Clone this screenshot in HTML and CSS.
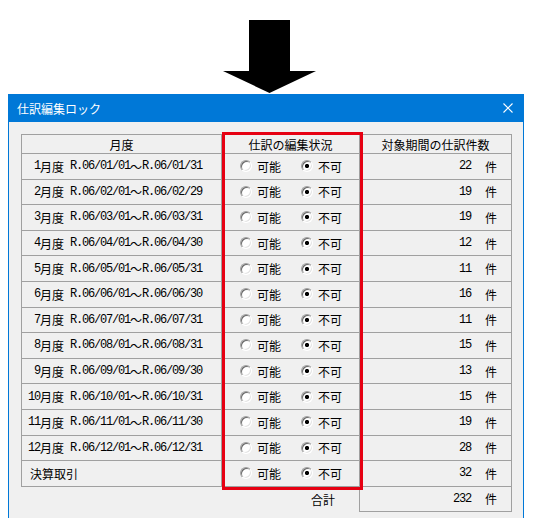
FILE: index.html
```html
<!DOCTYPE html>
<html lang="ja">
<head>
  <meta charset="UTF-8">
  <title>仕訳編集ロック</title>
  <link rel="stylesheet" href="styles.css">
</head>
<body>
  <svg class="arrow" viewBox="0 0 93 74" width="93" height="74">
    <polygon points="26,0 67,0 67,51 93,51 46.5,73 0,51 26,51" fill="#000"/>
  </svg>

  <div class="dialog">
    <div class="titlebar">
      <span class="title">仕訳編集ロック</span>
      <svg class="close" viewBox="0 0 10 10" width="10" height="10">
        <path d="M0.5 0.5 L9.5 9.5 M9.5 0.5 L0.5 9.5" stroke="#fff" stroke-width="1.1" fill="none"/>
      </svg>
    </div>

    <div class="body">
      <div class="grid-wrap">
        <div class="grid">
          <div class="cell head">月度</div>
          <div class="cell head">仕訳の編集状況</div>
          <div class="cell head">対象期間の仕訳件数</div>

          <div class="cell term"><span class="n"> 1</span>月度<span class="n"> R.06/01/01</span>～<span class="n">R.06/01/31</span></div>
          <div class="cell lock"><label><input type="radio" name="m1">可能</label><label><input type="radio" name="m1" checked>不可</label></div>
          <div class="cell count"><span class="n">22</span><span class="unit">件</span></div>

          <div class="cell term"><span class="n"> 2</span>月度<span class="n"> R.06/02/01</span>～<span class="n">R.06/02/29</span></div>
          <div class="cell lock"><label><input type="radio" name="m2">可能</label><label><input type="radio" name="m2" checked>不可</label></div>
          <div class="cell count"><span class="n">19</span><span class="unit">件</span></div>

          <div class="cell term"><span class="n"> 3</span>月度<span class="n"> R.06/03/01</span>～<span class="n">R.06/03/31</span></div>
          <div class="cell lock"><label><input type="radio" name="m3">可能</label><label><input type="radio" name="m3" checked>不可</label></div>
          <div class="cell count"><span class="n">19</span><span class="unit">件</span></div>

          <div class="cell term"><span class="n"> 4</span>月度<span class="n"> R.06/04/01</span>～<span class="n">R.06/04/30</span></div>
          <div class="cell lock"><label><input type="radio" name="m4">可能</label><label><input type="radio" name="m4" checked>不可</label></div>
          <div class="cell count"><span class="n">12</span><span class="unit">件</span></div>

          <div class="cell term"><span class="n"> 5</span>月度<span class="n"> R.06/05/01</span>～<span class="n">R.06/05/31</span></div>
          <div class="cell lock"><label><input type="radio" name="m5">可能</label><label><input type="radio" name="m5" checked>不可</label></div>
          <div class="cell count"><span class="n">11</span><span class="unit">件</span></div>

          <div class="cell term"><span class="n"> 6</span>月度<span class="n"> R.06/06/01</span>～<span class="n">R.06/06/30</span></div>
          <div class="cell lock"><label><input type="radio" name="m6">可能</label><label><input type="radio" name="m6" checked>不可</label></div>
          <div class="cell count"><span class="n">16</span><span class="unit">件</span></div>

          <div class="cell term"><span class="n"> 7</span>月度<span class="n"> R.06/07/01</span>～<span class="n">R.06/07/31</span></div>
          <div class="cell lock"><label><input type="radio" name="m7">可能</label><label><input type="radio" name="m7" checked>不可</label></div>
          <div class="cell count"><span class="n">11</span><span class="unit">件</span></div>

          <div class="cell term"><span class="n"> 8</span>月度<span class="n"> R.06/08/01</span>～<span class="n">R.06/08/31</span></div>
          <div class="cell lock"><label><input type="radio" name="m8">可能</label><label><input type="radio" name="m8" checked>不可</label></div>
          <div class="cell count"><span class="n">15</span><span class="unit">件</span></div>

          <div class="cell term"><span class="n"> 9</span>月度<span class="n"> R.06/09/01</span>～<span class="n">R.06/09/30</span></div>
          <div class="cell lock"><label><input type="radio" name="m9">可能</label><label><input type="radio" name="m9" checked>不可</label></div>
          <div class="cell count"><span class="n">13</span><span class="unit">件</span></div>

          <div class="cell term"><span class="n">10</span>月度<span class="n"> R.06/10/01</span>～<span class="n">R.06/10/31</span></div>
          <div class="cell lock"><label><input type="radio" name="m10">可能</label><label><input type="radio" name="m10" checked>不可</label></div>
          <div class="cell count"><span class="n">15</span><span class="unit">件</span></div>

          <div class="cell term"><span class="n">11</span>月度<span class="n"> R.06/11/01</span>～<span class="n">R.06/11/30</span></div>
          <div class="cell lock"><label><input type="radio" name="m11">可能</label><label><input type="radio" name="m11" checked>不可</label></div>
          <div class="cell count"><span class="n">19</span><span class="unit">件</span></div>

          <div class="cell term"><span class="n">12</span>月度<span class="n"> R.06/12/01</span>～<span class="n">R.06/12/31</span></div>
          <div class="cell lock"><label><input type="radio" name="m12">可能</label><label><input type="radio" name="m12" checked>不可</label></div>
          <div class="cell count"><span class="n">28</span><span class="unit">件</span></div>

          <div class="cell term closing">決算取引</div>
          <div class="cell lock"><label><input type="radio" name="m13">可能</label><label><input type="radio" name="m13" checked>不可</label></div>
          <div class="cell count"><span class="n">32</span><span class="unit">件</span></div>
        </div>

        <!-- highlight around the edit-status column -->
        <div class="lock-frame"></div>
      </div>

      <div class="total">
        <div class="total-label">合計</div>
        <div class="total-box"><span class="n">232</span><span class="unit">件</span></div>
      </div>
    </div>
  </div>
</body>
</html>
```

FILE: styles.css
```css
body {
  margin: 0;
  background: #fff;
  font-family: "Noto Sans CJK JP", sans-serif;
  font-size: 12px;
  color: #000;
}
.arrow {
  display: block;
  margin: 20px 0 0 223px;
}
.dialog {
  width: 516px;
  margin-left: 8px;
}
.titlebar {
  height: 28px;
  background: #0078d7;
  color: #fff;
  display: flex;
  align-items: center;
  justify-content: space-between;
  padding: 0 11px 0 9px;
}
.title {
  font-size: 12px;
}
.close {
  display: block;
}
.body {
  height: 396px;
  box-sizing: border-box;
  background: #f0f0f0;
  border-left: 1px solid #0078d7;
  border-right: 1px solid #0078d7;
  padding: 12px 11px 0 12px;
}
.grid-wrap {
  position: relative;
}
.grid {
  display: grid;
  grid-template-columns: 200px 138px 152px;
  grid-template-rows: 19px;
  grid-auto-rows: 25.6px;
  border-left: 1px solid #a0a0a0;
  border-top: 1px solid #a0a0a0;
}
.cell {
  display: flex;
  align-items: center;
  border-right: 1px solid #a0a0a0;
  border-bottom: 1px solid #a0a0a0;
  white-space: pre;
}
.head {
  justify-content: center;
}
.term {
  padding-left: 6px;
}
.term.closing {
  padding-left: 8px;
}
/* half-width digits: 6px per character, like the full-width glyphs at 12px */
.n {
  font-family: "Liberation Mono", monospace;
  font-size: 12px;
  letter-spacing: -1.2px;
}
.lock {
  padding-left: 18px;
  gap: 20px;
}
.lock label {
  display: flex;
  align-items: center;
  gap: 5px;
}
.lock input {
  appearance: none;
  margin: 0;
  width: 12px;
  height: 12px;
  box-sizing: border-box;
  border-radius: 50%;
  border: 1px solid;
  border-color: #a0a0a0 #fff #fff #a0a0a0;
  box-shadow: inset 1px 1px 0 #696969, inset -1px -1px 0 #e3e3e3;
  background: #fff;
}
.lock input:checked {
  background: radial-gradient(circle, #000 0 1.8px, #fff 2.4px);
}
.count {
  justify-content: flex-end;
  padding-right: 14px;
}
.unit {
  margin-left: 14px;
}
.lock-frame {
  position: absolute;
  left: 201px;
  top: -2px;
  width: 141px;
  height: 358px;
  box-sizing: border-box;
  border: 3px solid #e60012;
  pointer-events: none;
}
.total {
  display: flex;
  margin-left: 201px;
  height: 25px;
}
.total-label {
  width: 137px;
  display: flex;
  align-items: center;
  justify-content: flex-end;
  padding-right: 24px;
  box-sizing: border-box;
}
.total-box {
  width: 153px;
  box-sizing: border-box;
  border: 1px solid #a0a0a0;
  border-top: none;
  display: flex;
  align-items: center;
  justify-content: flex-end;
  padding-right: 14px;
}
```
